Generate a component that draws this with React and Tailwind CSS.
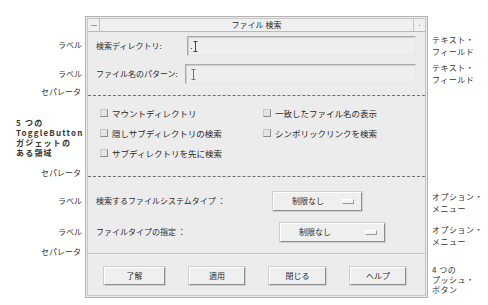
import React from "react";

const IBeam = ({ tone = "#444" }) => (
  <svg width="5" height="11" viewBox="0 0 5 11" className="block">
    <path d="M0.5 0.5h4M2.5 0.5v10M0.5 10.5h4" stroke={tone} strokeWidth="1" fill="none" />
  </svg>
);

const Field = ({ children }) => (
  <div className="flex-1 h-[20px] flex items-center pl-[3px] bg-[#eeeeee] border border-[#a9a9a9] border-b-[#e8e8e8] border-r-[#e8e8e8] shadow-[inset_1px_1px_0_#d0d0d0]">
    {children}
  </div>
);

const Check = ({ label }) => (
  <div className="h-[20px] flex items-center gap-[4px]">
    <span className="w-[8px] h-[8px] bg-[#e4e4e4] border border-[#c9c9c9] border-b-[#8c8c8c] border-r-[#8c8c8c]" />
    <span>{label}</span>
  </div>
);

const Raised = ({ className = "", children }) => (
  <div
    className={`flex items-center bg-[#efefef] border border-[#ffffff] border-b-[#8e8e8e] border-r-[#8e8e8e] outline outline-1 outline-[#cfcfcf] ${className}`}
  >
    {children}
  </div>
);

const OptionMenu = ({ width }) => (
  <Raised className={`${width} h-[19px] pl-[18px] pr-[7px] justify-between`}>
    <span>制限なし</span>
    <span className="w-[12px] h-[5px] bg-[#f4f4f4] border border-[#ffffff] border-b-[#999] border-r-[#999]" />
  </Raised>
);

const Separator = ({ dashed = true, top, bottom }) => (
  <div className={`${top} ${bottom}`}>
    {dashed ? (
      <div className="border-t border-dashed border-[#6f6f6f]" />
    ) : (
      <div className="border-t border-[#c2c2c2] shadow-[0_1px_0_#f8f8f8]" />
    )}
  </div>
);

export default function App() {
  return (
    <div className="w-[488px] h-[305px] bg-white flex text-[8px] text-[#2a2a2a] font-['Noto_Sans_CJK_JP',sans-serif] leading-[12px] overflow-hidden">
      {/* left callouts */}
      <div className="w-[85px] flex flex-col text-[#333]">
        <div className="mt-[39px] h-[12px] text-right pr-[3px]">ラベル</div>
        <div className="mt-[17px] h-[12px] text-right pr-[3px]">ラベル</div>
        <div className="mt-[6px] h-[12px] text-right pr-[4px]">セパレータ</div>
        <div className="mt-[20px] h-[40px] pl-[16px] leading-[10px] font-bold tracking-[1.2px]">
          <div>5 つの</div>
          <div>ToggleButton</div>
          <div>ガジェットの</div>
          <div>ある領域</div>
        </div>
        <div className="mt-[9px] h-[12px] text-right pr-[4px]">セパレータ</div>
        <div className="mt-[16px] h-[12px] text-right pr-[3px]">ラベル</div>
        <div className="mt-[19px] h-[12px] text-right pr-[3px]">ラベル</div>
        <div className="mt-[8px] h-[12px] text-right pr-[4px]">セパレータ</div>
      </div>

      {/* dialog window */}
      <div className="w-[343px] mt-[16px] h-[282px] border border-[#b3b3b3] p-[1px] bg-[#ececec]">
        <div className="h-full border border-[#c6c6c6] flex flex-col">
          <div className="h-[13px] flex items-center border-b border-[#b9b9b9] bg-[#f0f0f0]">
            <div className="w-[12px] h-full border-r border-[#c2c2c2] flex items-center justify-center">
              <span className="w-[6px] border-t border-[#999]" />
            </div>
            <div className="flex-1 text-center leading-[12px]">ファイル 検索</div>
            <div className="w-[12px] h-full border-l border-[#c2c2c2] flex items-center justify-center">
              <span className="w-[1px] h-[1px] bg-[#888]" />
            </div>
          </div>

          <div className="flex flex-col pl-[8px] pr-[9px]">
            <div className="h-[28px] flex items-center">
              <span className="w-[91px]">検索ディレクトリ:</span>
              <Field>
                <span className="w-[1px] h-[1px] bg-[#444] mt-[4px] mr-[1px]" />
                <IBeam />
              </Field>
            </div>
            <div className="h-[28px] flex items-center">
              <span className="w-[89px]">ファイル名のパターン:</span>
              <Field>
                <span className="ml-[2px]">
                  <IBeam tone="#777" />
                </span>
              </Field>
            </div>
          </div>

          <Separator top="mt-[7px]" bottom="mb-[7px]" />

          <div className="grid grid-cols-[163px_1fr] pl-[12px] text-[8.5px]">
            <div className="flex flex-col">
              <Check label="マウントディレクトリ" />
              <Check label="隠しサブディレクトリの検索" />
              <Check label="サブディレクトリを先に検索" />
            </div>
            <div className="flex flex-col">
              <Check label="一致したファイル名の表示" />
              <Check label="シンボリックリンクを検索" />
            </div>
          </div>

          <Separator top="mt-[13px]" bottom="mb-[9px]" />

          <div className="flex flex-col pl-[8px]">
            <div className="h-[30px] flex items-center">
              <span className="w-[177px]">検索するファイルシステムタイプ ：</span>
              <OptionMenu width="w-[89px]" />
            </div>
            <div className="h-[32px] flex items-center">
              <span className="w-[184px]">ファイルタイプの指定 ：</span>
              <OptionMenu width="w-[105px]" />
            </div>
          </div>

          <Separator dashed={false} top="mt-[5px]" bottom="mb-[4px]" />

          <div className="h-[36px] flex items-center pl-[16px] gap-[24px]">
            <Raised className="w-[61px] h-[18px] justify-center">了解</Raised>
            <Raised className="w-[56px] h-[18px] justify-center">適用</Raised>
            <Raised className="w-[57px] h-[18px] justify-center">閉じる</Raised>
            <Raised className="w-[56px] h-[18px] justify-center">ヘルプ</Raised>
          </div>
        </div>
      </div>

      {/* right callouts */}
      <div className="flex-1 flex flex-col pl-[4px] text-[#333] tracking-[0.5px]">
        <div className="mt-[34px] h-[24px]">
          <div>テキスト・</div>
          <div>フィールド</div>
        </div>
        <div className="mt-[4px] h-[24px]">
          <div>テキスト・</div>
          <div>フィールド</div>
        </div>
        <div className="mt-[105px] h-[24px]">
          <div>オプション・</div>
          <div>メニュー</div>
        </div>
        <div className="mt-[9px] h-[24px]">
          <div>オプション・</div>
          <div>メニュー</div>
        </div>
        <div className="mt-[17px] h-[30px] leading-[10px]">
          <div>4 つの</div>
          <div>プッシュ・</div>
          <div>ボタン</div>
        </div>
      </div>
    </div>
  );
}
